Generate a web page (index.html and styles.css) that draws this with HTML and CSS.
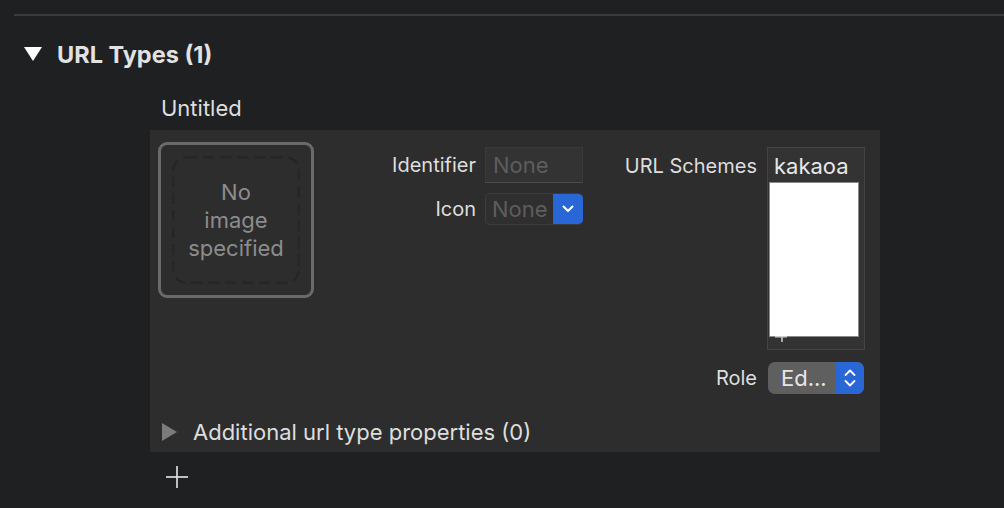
FILE: index.html
```html
<!DOCTYPE html>
<html>
<head>
 <meta charset="UTF-8">
 <title>URL Types</title>
 <link rel="stylesheet" href="styles.css">
</head>
<body>
<div class="rule"></div>

<div class="section-head">
  <svg class="disclosure-down" width="18" height="14" viewBox="0 0 18 14"><polygon points="0,0 18,0 9,14" fill="#ffffff"/></svg>
  <span class="section-title">URL Types (1)</span>
</div>

<div class="item-title">Untitled</div>

<div class="panel">
  <div class="panel-top">
    <div class="well">
      <svg class="well-dash" width="128" height="128" viewBox="0 0 128 128"><rect x="1.25" y="1.25" width="125.5" height="125.5" rx="13" fill="none" stroke="#262626" stroke-width="2.5" stroke-dasharray="11 6"/></svg>
      <div class="well-inner">No<br>image<br>specified</div>
    </div>

    <div class="fields">
      <div class="label">Identifier</div>
      <div class="text-field">None</div>
      <div class="label">Icon</div>
      <div class="popup popup-dark">
        <span class="popup-value">None</span>
        <span class="popup-btn">
          <svg width="14" height="10" viewBox="0 0 14 10"><polyline points="2.5,2.5 7,7 11.5,2.5" fill="none" stroke="#fff" stroke-width="2" stroke-linecap="round" stroke-linejoin="round"/></svg>
        </span>
      </div>
    </div>

    <div class="schemes">
      <div class="label label-top">URL Schemes</div>
      <div class="scheme-box">
        <div class="scheme-row">kakaoa</div>
        <div class="scheme-edit"></div>
        <svg class="scheme-plus" width="12" height="7" viewBox="0 0 12 7"><line x1="0" y1="0.75" x2="12" y2="0.75" stroke="#cfcfcf" stroke-width="1.5"/><line x1="7" y1="0" x2="7" y2="6" stroke="#cfcfcf" stroke-width="1.5"/></svg>
      </div>
      <div class="label">Role</div>
      <div class="popup popup-gray">
        <span class="popup-value">Ed...</span>
        <span class="popup-btn">
          <svg width="14" height="22" viewBox="0 0 14 22"><polyline points="2.5,8 7,3.5 11.5,8" fill="none" stroke="#fff" stroke-width="1.8" stroke-linecap="round" stroke-linejoin="round"/><polyline points="2.5,14 7,18.5 11.5,14" fill="none" stroke="#fff" stroke-width="1.8" stroke-linecap="round" stroke-linejoin="round"/></svg>
        </span>
      </div>
    </div>
  </div>

  <div class="more-row">
    <svg class="disclosure-right" width="15" height="18" viewBox="0 0 15 18"><polygon points="0,0 15,9 0,18" fill="#7b7b7b"/></svg>
    <span class="more-text">Additional url type properties (0)</span>
  </div>
</div>

<svg class="add-btn" width="22" height="22" viewBox="0 0 22 22"><line x1="11" y1="0" x2="11" y2="22" stroke="#e8e8e8" stroke-width="1.6"/><line x1="0" y1="11" x2="22" y2="11" stroke="#e8e8e8" stroke-width="1.6"/></svg>

</body>
</html>
```

FILE: styles.css
```css
body {
  margin: 0;
  background: #1f2022;
  font-family: Inter, "Liberation Sans", sans-serif;
  color: #dfdfdf;
  height: 508px;
  overflow: hidden;
}
.rule {
  margin: 14px 0 0 14px;
  height: 2px;
  background: #3a3b3d;
}
.section-head {
  display: flex;
  align-items: center;
  margin-top: 26px;
  padding-left: 24px;
  height: 24px;
}
.disclosure-down {
  margin-right: 15px;
}
.section-title {
  font-size: 23.5px;
  font-weight: 700;
  color: #e2e2e2;
}
.item-title {
  margin: 28px 0 0 161px;
  font-size: 22px;
  line-height: 28px;
  color: #dedede;
}
.panel {
  display: flex;
  flex-direction: column;
  margin: 8px 0 0 150px;
  width: 730px;
  height: 322px;
  box-sizing: border-box;
  padding: 12px 0 0 8px;
  background: #2d2d2d;
}
.panel-top {
  display: flex;
  align-items: flex-start;
}
.well {
  position: relative;
  width: 156px;
  height: 156px;
  box-sizing: border-box;
  border: 3px solid #6a6a6a;
  border-radius: 9px;
  padding: 11px;
}
.well-dash {
  position: absolute;
  left: 11px;
  top: 11px;
}
.well-inner {
  height: 100%;
  display: flex;
  align-items: center;
  justify-content: center;
  text-align: center;
  font-size: 22px;
  line-height: 28px;
  color: #8c8c8c;
}
.fields {
  display: grid;
  grid-template-columns: 100px 98px;
  grid-template-rows: 36px 32px;
  column-gap: 9px;
  row-gap: 10px;
  align-items: center;
  margin: 5px 0 0 62px;
}
.label {
  text-align: right;
  font-size: 20px;
  color: #dedede;
}
.label-top {
  align-self: start;
  line-height: 38px;
}
.text-field {
  height: 36px;
  box-sizing: border-box;
  padding-left: 7px;
  line-height: 34px;
  font-size: 22px;
  color: #5d5d5d;
  background: #333333;
  border: 1px solid #3a3a3a;
  border-bottom-color: #4c4c4c;
}
.popup {
  display: flex;
  height: 32px;
  box-sizing: border-box;
  font-size: 22px;
  border-radius: 5px;
  overflow: hidden;
}
.popup-dark {
  background: #2f2f2f;
  border: 1px solid #3d3d3d;
  border-right: none;
  color: #5d5d5d;
}
.popup-gray {
  margin-left: 1px;
  width: 96px;
  background: #5f5f5f;
  color: #e6e6e6;
  border-radius: 7px;
}
.popup-value {
  flex: 1;
  line-height: 30px;
  padding-left: 6px;
}
.popup-gray .popup-value {
  line-height: 32px;
  padding-left: 13px;
}
.popup-btn {
  width: 30px;
  display: flex;
  align-items: center;
  justify-content: center;
  background: #2a67d6;
}
.popup-gray .popup-btn {
  width: 28px;
}
.schemes {
  display: grid;
  grid-template-columns: 140px 98px;
  grid-template-rows: 203px 32px;
  column-gap: 10px;
  row-gap: 12px;
  align-items: center;
  margin: 5px 0 0 34px;
}
.scheme-box {
  position: relative;
  height: 203px;
  box-sizing: border-box;
  border: 1px solid #444444;
  background: #333333;
}
.scheme-row {
  height: 34px;
  padding-left: 6px;
  line-height: 36px;
  font-size: 22px;
  color: #e8e8e8;
}
.scheme-edit {
  margin-left: 1px;
  width: 90px;
  height: 155px;
  background: #ffffff;
  border: 1px solid #8a8a8a;
  box-sizing: border-box;
}
.scheme-plus {
  position: absolute;
  left: 7px;
  top: 188px;
}
.more-row {
  display: flex;
  align-items: center;
  margin-top: auto;
  height: 40px;
  padding-left: 4px;
}
.disclosure-right {
  margin-right: 16px;
}
.more-text {
  font-size: 22px;
  color: #dedede;
}
.add-btn {
  display: block;
  margin: 14px 0 0 166px;
}
```
